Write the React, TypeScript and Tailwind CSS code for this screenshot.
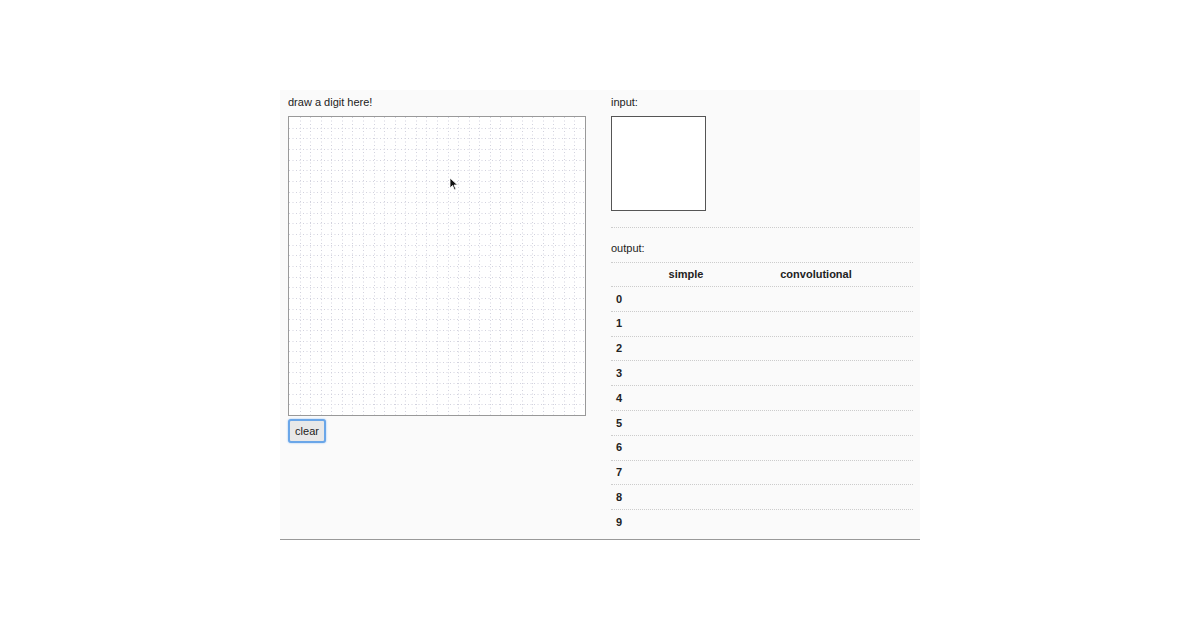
import React from 'react';

const CELLS = 28;
const W = 296;
const H = 298;

const digits = [0, 1, 2, 3, 4, 5, 6, 7, 8, 9];

function DrawGrid() {
  const lines = [];
  for (let i = 1; i < CELLS; i++) {
    const x = Math.round((i * W) / CELLS) + 0.5;
    const y = Math.round((i * H) / CELLS) + 0.5;
    lines.push(<line key={`v${i}`} x1={x} y1={0} x2={x} y2={H} />);
    lines.push(<line key={`h${i}`} x1={0} y1={y} x2={W} y2={y} />);
  }
  return (
    <svg width={W} height={H} className="block">
      <g stroke="#d2d2de" strokeWidth={1} strokeDasharray="1 2.5">
        {lines}
      </g>
    </svg>
  );
}

function Cursor() {
  return (
    <svg width="10" height="14" viewBox="0 0 10 14" className="absolute left-[160px] top-[60px]">
      <path d="M1 1 L1 11 L3.5 8.5 L5.5 13 L7 12.3 L5 8 L8.5 8 Z" fill="#111" stroke="#fff" strokeWidth="0.8" />
    </svg>
  );
}

export default function App() {
  return (
    <div className="w-[1200px] h-[630px] bg-white flex justify-center pt-[90px] font-['Liberation_Sans',Arial,sans-serif] text-[11px] text-[#222]">
      <div className="w-[640px] h-[450px] bg-[#fafafa] border-b border-[#999] flex">
        <div className="w-[331px] pl-2 pt-[6px] flex flex-col">
          <div className="h-[20px] leading-[13px]">draw a digit here!</div>
          <div className="relative w-[298px] h-[300px] border border-[#999] bg-white">
            <DrawGrid />
            <Cursor />
          </div>
          <button className="mt-[3px] w-[38px] h-[24px] rounded-[3px] border-2 border-[#6aa6e8] bg-[#e8e8e8] text-[11px] text-[#222] leading-none shadow-[0_0_2px_#8fbff5]">
            clear
          </button>
        </div>
        <div className="flex-1 pt-[6px] flex flex-col">
          <div className="h-[20px] leading-[13px]">input:</div>
          <div className="w-[95px] h-[95px] border border-[#555] bg-white" />
          <div className="w-[302px] mt-[16px] border-t border-dotted border-[#ccc]" />
          <div className="mt-[14px] h-[20px] leading-[13px]">output:</div>
          <div className="w-[302px] flex flex-col">
            <div className="flex h-[25px] items-center border-t border-b border-dotted border-[#ccc] font-bold">
              <div className="w-[30px]" />
              <div className="w-[90px] text-center">simple</div>
              <div className="w-[170px] text-center">convolutional</div>
            </div>
            {digits.map((d) => (
              <div
                key={d}
                className={`flex h-[24.8px] items-center font-bold pl-[5px] ${d < 9 ? 'border-b border-dotted border-[#ccc]' : ''}`}
              >
                {d}
              </div>
            ))}
          </div>
        </div>
      </div>
    </div>
  );
}
